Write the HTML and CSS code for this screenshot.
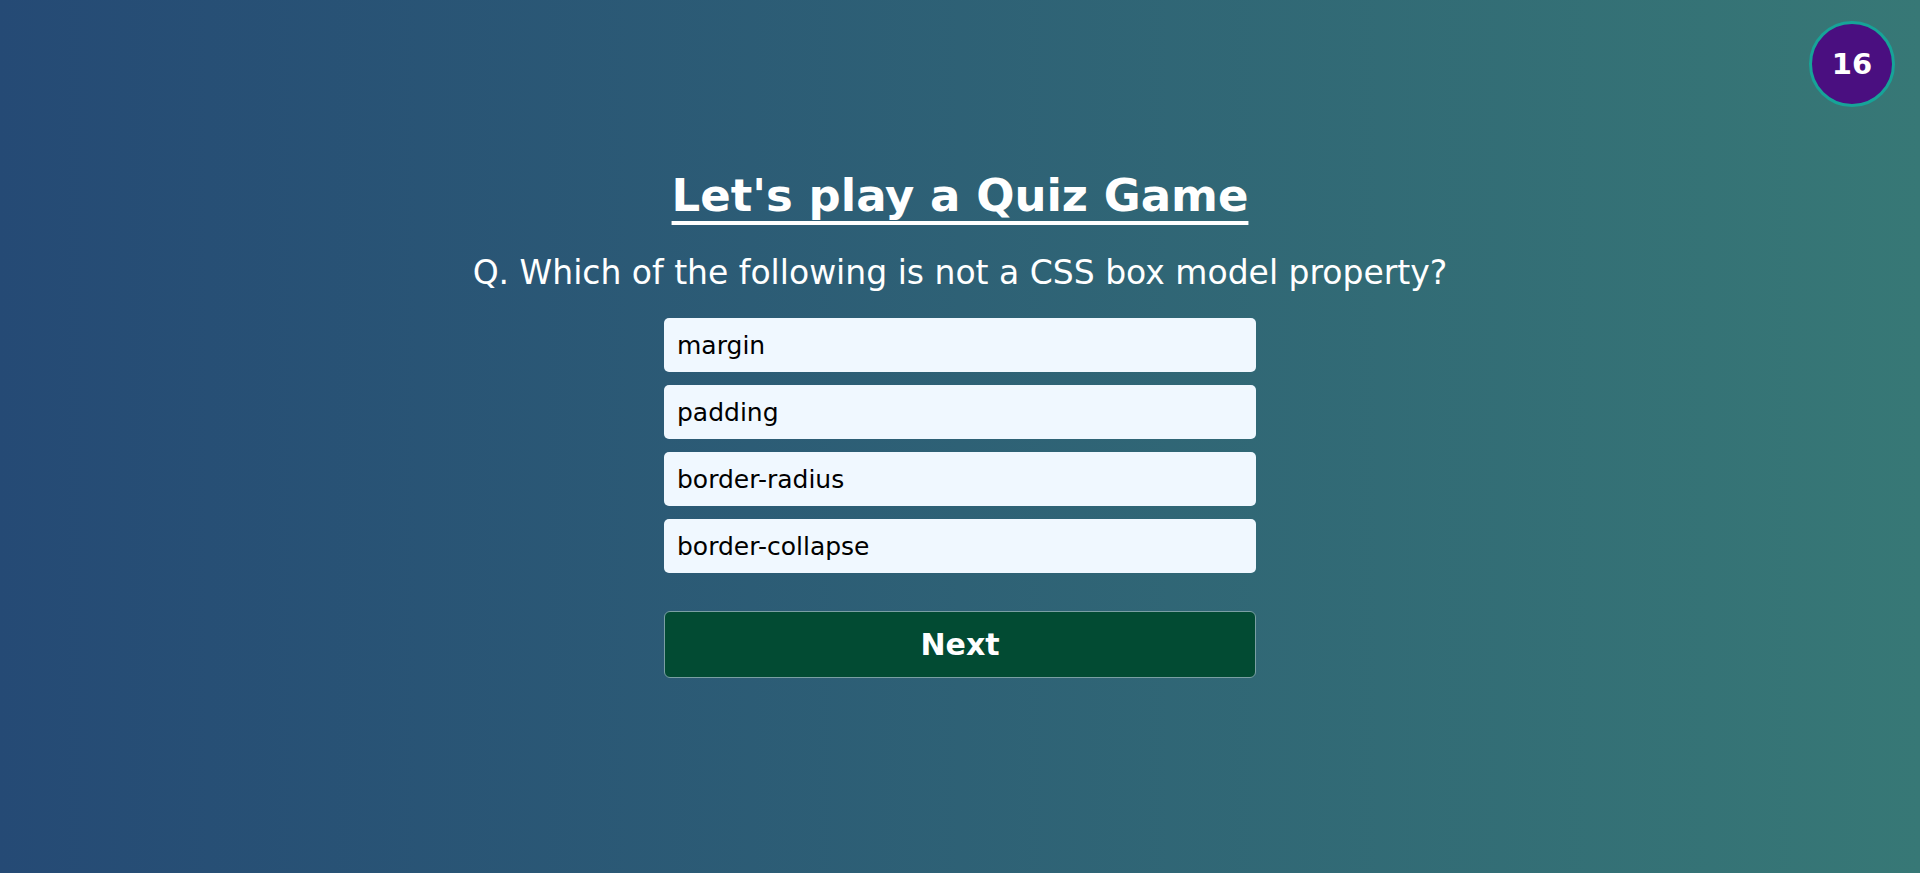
FILE: index.html
```html
<!DOCTYPE html>
<html lang="en">
<head>
<meta charset="utf-8">
<title>Quiz Game</title>
<link rel="stylesheet" href="styles.css">
</head>
<body>
<div class="timer">16</div>
<main class="quiz">
  <h1 class="title">Let's play a Quiz Game</h1>
  <p class="question">Q. Which of the following is not a CSS box model property?</p>
  <div class="options">
    <button class="option">margin</button>
    <button class="option">padding</button>
    <button class="option">border-radius</button>
    <button class="option">border-collapse</button>
  </div>
  <button class="next">Next</button>
</main>
</body>
</html>
```
FILE: styles.css
```css
html, body {
  margin: 0;
  height: 100%;
}
body {
  background: linear-gradient(to right, #254a75, #377876);
  font-family: "DejaVu Sans", Verdana, sans-serif;
  color: #fff;
  position: relative;
  overflow: hidden;
}
.timer {
  position: absolute;
  top: 21px;
  right: 25px;
  width: 80px;
  height: 80px;
  border: 3px solid #17a398;
  border-radius: 50%;
  background: #4a0f80;
  color: #fff;
  font-weight: bold;
  font-size: 29px;
  display: flex;
  align-items: center;
  justify-content: center;
}
.quiz {
  display: flex;
  flex-direction: column;
  align-items: center;
  padding-top: 168px;
}
.title {
  margin: 0;
  font-size: 45px;
  line-height: 56px;
  font-weight: bold;
  text-decoration: underline;
  text-decoration-thickness: 4px;
  text-underline-offset: 10px;
  text-decoration-skip-ink: none;
}
.question {
  margin: 29px 0 0;
  font-size: 33px;
  line-height: 40px;
}
.options {
  width: 592px;
  margin-top: 25px;
  display: flex;
  flex-direction: column;
  gap: 13px;
}
.option {
  height: 54px;
  border: none;
  border-radius: 5px;
  background: #f0f8ff;
  color: #000;
  text-align: left;
  padding: 0 13px;
  font-family: "DejaVu Sans", Verdana, sans-serif;
  font-size: 25px;
}
.next {
  width: 592px;
  height: 67px;
  margin-top: 38px;
  background: #024b33;
  border: 1px solid #7a9fa3;
  border-radius: 6px;
  color: #fff;
  font-family: "DejaVu Sans", Verdana, sans-serif;
  font-weight: bold;
  font-size: 30px;
}
```
